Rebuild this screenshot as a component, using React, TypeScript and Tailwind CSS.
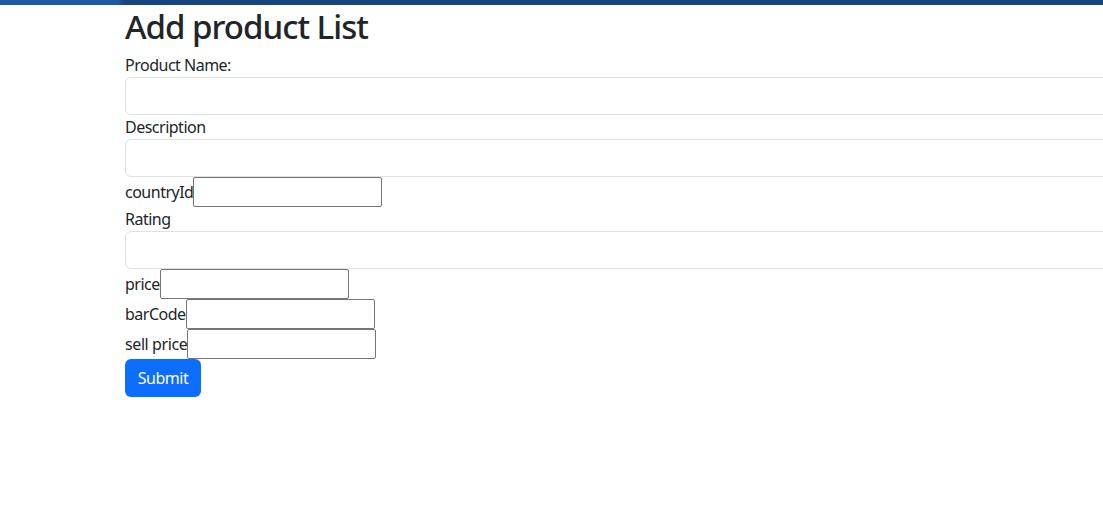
export default function App() {
  const stacked = 'block w-[1100px] h-[38px] rounded-[6px] border border-[#dee2e6] bg-white px-3'
  const inline = 'w-[189px] h-[30px] rounded-[2px] border border-[#767676] bg-white px-[2px]'

  return (
    <div className="min-h-[519px] w-[1103px] overflow-hidden bg-white text-[16px] leading-6 text-[#212529] font-['Segoe_UI','Noto_Sans',sans-serif]">
      <div className="h-[5px] bg-[linear-gradient(90deg,#1f5aa0_0px,#1f5aa0_118px,#17457f_124px,#17457f_100%)]" />
      <div className="pl-[125px]">
        <h1 className="mb-2 h-10 pt-[4px] text-[33px] font-medium leading-9 tracking-[-1px]">Add product List</h1>
        <form className="tracking-[-0.5px]">
          <label className="block">Product Name:</label>
          <input className={stacked} />
          <label className="block">Description</label>
          <input className={stacked} />
          <div className="flex h-[30px] items-center">
            <label>countryId</label>
            <input className={inline} />
          </div>
          <label className="block">Rating</label>
          <input className={stacked} />
          <div className="flex h-[30px] items-center">
            <label>price</label>
            <input className={inline} />
          </div>
          <div className="flex h-[30px] items-center">
            <label>barCode</label>
            <input className={inline} />
          </div>
          <div className="flex h-[30px] items-center">
            <label className="tracking-[-0.4px]">sell price</label>
            <input className={inline} />
          </div>
          <button
            type="button"
            className="h-[38px] w-[76px] rounded-[6px] bg-[#0d6efd] text-white"
          >
            Submit
          </button>
        </form>
      </div>
    </div>
  )
}
